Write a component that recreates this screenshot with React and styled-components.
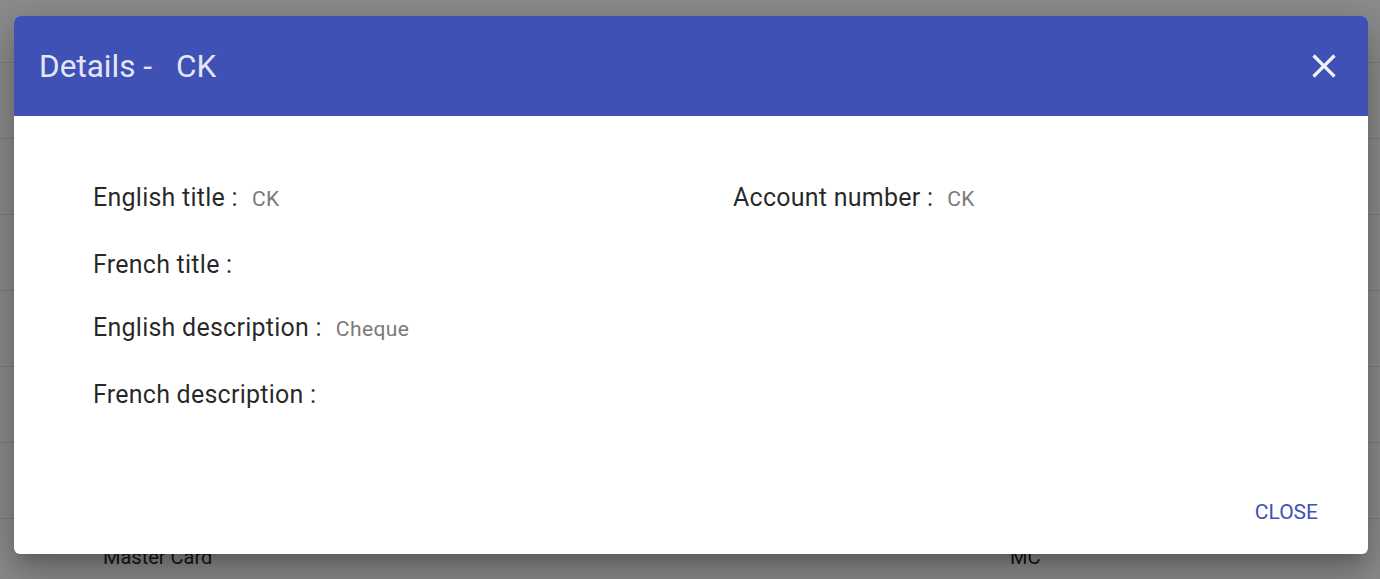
import React from 'react';
import styled, { createGlobalStyle } from 'styled-components';

const GlobalStyle = createGlobalStyle`
  html, body {
    margin: 0;
    padding: 0;
    background: #ffffff;
    font-family: Roboto, 'Liberation Sans', sans-serif;
    overflow: hidden;
  }
`;

const Page = styled.div`
  width: 1380px;
  height: 579px;
  position: relative;
  overflow: hidden;
  background: #ffffff;
`;

const Table = styled.div`
  display: flex;
  flex-direction: column;
  padding-top: 62px;
`;

const TableRow = styled.div`
  height: 75px;
  border-top: 1px solid #e4e4e4;
  display: grid;
  grid-template-columns: 907px 1fr;
  align-items: center;
  padding-left: 103px;
  font-size: 20px;
  color: rgba(0, 0, 0, 0.87);
`;

const Backdrop = styled.div`
  position: absolute;
  inset: 0;
  background: rgba(0, 0, 0, 0.45);
`;

const Dialog = styled.div`
  position: absolute;
  left: 14px;
  top: 16px;
  width: 1354px;
  height: 538px;
  background: #ffffff;
  border-radius: 6px;
  overflow: hidden;
  display: flex;
  flex-direction: column;
  box-shadow: 0 11px 15px -7px rgba(0, 0, 0, 0.2), 0 24px 38px 3px rgba(0, 0, 0, 0.14),
    0 9px 46px 8px rgba(0, 0, 0, 0.12);
`;

const Header = styled.div`
  height: 100px;
  flex-shrink: 0;
  background: #3f51b5;
  display: flex;
  align-items: center;
  justify-content: space-between;
  padding: 0 24px 0 25px;
`;

const Title = styled.h2`
  margin: 0;
  font-size: 31.5px;
  font-weight: 400;
  color: #e3e6f6;
`;

const TitleCode = styled.span`
  margin-left: 24px;
`;

const IconButton = styled.button`
  border: none;
  background: transparent;
  padding: 0;
  width: 40px;
  height: 40px;
  display: flex;
  align-items: center;
  justify-content: center;
  color: #eef0fa;
  cursor: pointer;
`;

const Body = styled.div`
  flex: 1;
  padding: 67px 79px 0 79px;
  display: grid;
  grid-template-columns: 640px 1fr;
  align-content: start;
`;

const Column = styled.div`
  display: flex;
  flex-direction: column;
  gap: 32.5px;
`;

const Field = styled.div`
  display: flex;
  align-items: baseline;
`;

const Label = styled.span`
  font-size: 25px;
  line-height: 30px;
  letter-spacing: 0.25px;
  color: rgba(0, 0, 0, 0.85);
`;

const Value = styled.span`
  font-size: 21px;
  line-height: 25px;
  letter-spacing: 0.4px;
  color: #7a7a7a;
  margin-left: 14px;
  padding-bottom: 5.5px;
`;

const Actions = styled.div`
  display: flex;
  justify-content: flex-end;
  padding: 0 42px 24px 0;
`;

const TextButton = styled.button`
  border: none;
  background: transparent;
  font-family: Roboto, 'Liberation Sans', sans-serif;
  font-size: 21px;
  font-weight: 400;
  color: #3f51b5;
  text-transform: uppercase;
  padding: 6px 8px;
  cursor: pointer;
`;

const rows = [
  ['', ''],
  ['', ''],
  ['', ''],
  ['', ''],
  ['', ''],
  ['', ''],
  ['Master Card', 'MC'],
];

const leftFields = [
  { label: 'English title', value: 'CK' },
  { label: 'French title', value: '' },
  { label: 'English description', value: 'Cheque' },
  { label: 'French description', value: '' },
];

const CloseIcon = () => (
  <svg width="40" height="40" viewBox="0 0 24 24" fill="currentColor">
    <path d="M19 6.41L17.59 5 12 10.59 6.41 5 5 6.41 10.59 12 5 17.59 6.41 19 12 13.41 17.59 19 19 17.59 13.41 12z" />
  </svg>
);

export default function App() {
  return (
    <Page>
      <GlobalStyle />
      <Table>
        {rows.map((r, i) => (
          <TableRow key={i}>
            <span>{r[0]}</span>
            <span>{r[1]}</span>
          </TableRow>
        ))}
      </Table>
      <Backdrop />
      <Dialog>
        <Header>
          <Title>
            Details -<TitleCode>CK</TitleCode>
          </Title>
          <IconButton aria-label="close">
            <CloseIcon />
          </IconButton>
        </Header>
        <Body>
          <Column>
            {leftFields.map((f) => (
              <Field key={f.label}>
                <Label>{f.label} :</Label>
                {f.value && <Value>{f.value}</Value>}
              </Field>
            ))}
          </Column>
          <Column>
            <Field>
              <Label>Account number :</Label>
              <Value>CK</Value>
            </Field>
          </Column>
        </Body>
        <Actions>
          <TextButton>Close</TextButton>
        </Actions>
      </Dialog>
    </Page>
  );
}
